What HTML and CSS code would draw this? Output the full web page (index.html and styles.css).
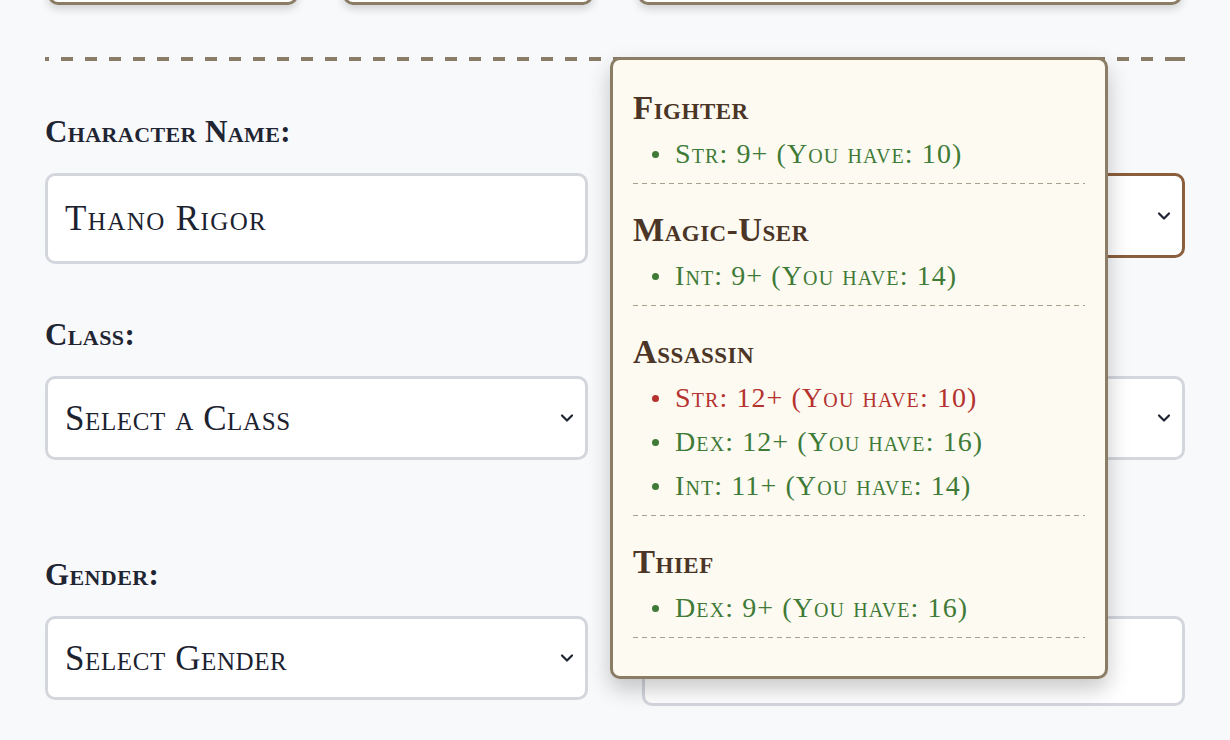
FILE: index.html
```html
<!DOCTYPE html>
<html lang="en">
<head>
<meta charset="utf-8">
<title>Character Creation</title>
<link rel="stylesheet" href="styles.css">
</head>
<body>
<div class="page">
  <div class="cards">
    <div class="card"></div>
    <div class="card"></div>
    <div class="card card-wide"></div>
  </div>

  <div class="divider"></div>

  <form class="form-grid">
    <div class="field">
      <label class="label" for="name">Character Name:</label>
      <input class="control input" id="name" type="text" value="Thano Rigor">
    </div>
    <div class="field">
      <span class="label label-blank" aria-hidden="true"></span>
      <div class="select-wrap">
        <select class="control select focused" id="race" aria-label="Race">
          <option value=""></option>
        </select>
        <svg class="chev" width="14" height="9" viewBox="0 0 14 9"><path d="M2 2l5 5 5-5" fill="none" stroke="#1f2532" stroke-width="2.2" stroke-linecap="round" stroke-linejoin="round"/></svg>
      </div>
    </div>

    <div class="field">
      <label class="label" for="class">Class:</label>
      <div class="select-wrap">
        <select class="control select" id="class">
          <option>Select a Class</option>
        </select>
        <svg class="chev" width="14" height="9" viewBox="0 0 14 9"><path d="M2 2l5 5 5-5" fill="none" stroke="#1f2532" stroke-width="2.2" stroke-linecap="round" stroke-linejoin="round"/></svg>
      </div>
    </div>
    <div class="field">
      <span class="label label-blank" aria-hidden="true"></span>
      <div class="select-wrap">
        <select class="control select" id="align" aria-label="Alignment">
          <option value=""></option>
        </select>
        <svg class="chev" width="14" height="9" viewBox="0 0 14 9"><path d="M2 2l5 5 5-5" fill="none" stroke="#1f2532" stroke-width="2.2" stroke-linecap="round" stroke-linejoin="round"/></svg>
      </div>
      <div class="hint"></div>
    </div>

    <div class="field">
      <label class="label" for="gender">Gender:</label>
      <div class="select-wrap">
        <select class="control select" id="gender">
          <option>Select Gender</option>
        </select>
        <svg class="chev" width="14" height="9" viewBox="0 0 14 9"><path d="M2 2l5 5 5-5" fill="none" stroke="#1f2532" stroke-width="2.2" stroke-linecap="round" stroke-linejoin="round"/></svg>
      </div>
    </div>
    <div class="field">
      <span class="label label-blank" aria-hidden="true"></span>
      <input class="control input input-tall" id="age" type="text" value="" aria-label="Age">
    </div>
  </form>

  <div class="popover">
    <section class="req">
      <h3 class="req-title">Fighter</h3>
      <ul class="req-list">
        <li class="ok">Str: 9+ (You have: 10)</li>
      </ul>
    </section>
    <section class="req">
      <h3 class="req-title">Magic-User</h3>
      <ul class="req-list">
        <li class="ok">Int: 9+ (You have: 14)</li>
      </ul>
    </section>
    <section class="req">
      <h3 class="req-title">Assassin</h3>
      <ul class="req-list">
        <li class="bad">Str: 12+ (You have: 10)</li>
        <li class="ok">Dex: 12+ (You have: 16)</li>
        <li class="ok">Int: 11+ (You have: 14)</li>
      </ul>
    </section>
    <section class="req">
      <h3 class="req-title">Thief</h3>
      <ul class="req-list">
        <li class="ok">Dex: 9+ (You have: 16)</li>
      </ul>
    </section>
  </div>
</div>
</body>
</html>
```

FILE: styles.css
```css
* { box-sizing: border-box; }

html, body {
  margin: 0;
  padding: 0;
  background: #f8f9fb;
  overflow: hidden;
}

body {
  font-family: "Liberation Serif", "Times New Roman", serif;
  font-variant: small-caps;
  color: #1f2532;
}

.page {
  position: relative;
  display: flow-root;
  margin: 0 45px;
  height: 740px;
}

.cards {
  display: grid;
  grid-template-columns: repeat(4, 1fr);
  column-gap: 45px;
  padding: 0 3px;
  margin-top: -75px;
}

.card {
  height: 80px;
  background: #ffffff;
  border: 3px solid #8b7d65;
  border-radius: 10px;
  box-shadow: 0 4px 8px rgba(0, 0, 0, 0.16);
}

.card-wide { grid-column: span 2; }

.divider {
  height: 4px;
  margin: 52px 0 51px;
  background-image: repeating-linear-gradient(to right, #8b7d65 0 12px, transparent 12px 24px);
  background-position: -8px 0;
}

.form-grid {
  display: grid;
  grid-template-columns: 1fr 1fr;
  column-gap: 54px;
  row-gap: 51px;
  margin: 0;
}

.field {
  display: flex;
  flex-direction: column;
}

.label {
  display: block;
  font-size: 31px;
  line-height: 40px;
  font-weight: 700;
  letter-spacing: 0.4px;
  color: #1f2532;
  margin-bottom: 21px;
}

.label-blank { height: 40px; }

.control {
  display: block;
  width: 100%;
  font-family: "Liberation Serif", "Times New Roman", serif;
  font-variant: small-caps;
  font-size: 35px;
  letter-spacing: 0.6px;
  color: #1c2230;
  background: #ffffff;
  border: 3px solid #d3d6dd;
  border-radius: 10px;
  padding: 0 40px 0 17px;
  outline: none;
}

.input { height: 91px; letter-spacing: 1.4px; }
.input-tall { height: 90px; }

.select {
  height: 84px;
  appearance: none;
  -webkit-appearance: none;
}

.select.focused {
  height: 85px;
  border-color: #8b5e3c;
}

.select-wrap {
  position: relative;
}

.chev {
  position: absolute;
  right: 14px;
  top: 50%;
  transform: translateY(-50%);
  pointer-events: none;
}

.hint {
  margin-top: 10px;
  height: 34px;
}

.popover {
  position: absolute;
  left: 565px;
  top: 57px;
  width: 498px;
  background: #fdfaf2;
  border: 3px solid #8b7d65;
  border-radius: 10px;
  box-shadow: 0 10px 22px rgba(0, 0, 0, 0.22);
  padding: 3px 20px 37px;
}

.req {
  padding: 23px 0 8px;
  background-image: repeating-linear-gradient(to right, #a8a08d 0 5px, transparent 5px 9px);
  background-size: 100% 1px;
  background-position: left bottom;
  background-repeat: no-repeat;
  border-bottom: 1px solid transparent;
}

.req-title {
  margin: 0 0 2px;
  font-size: 33px;
  line-height: 44px;
  font-weight: 700;
  letter-spacing: 0.5px;
  color: #4b3526;
}

.req-list {
  list-style: none;
  margin: 0;
  padding: 0;
}

.req-list li {
  display: flex;
  align-items: center;
  font-size: 28px;
  line-height: 44px;
  letter-spacing: 1.1px;
}

.req-list li::before {
  content: "";
  flex: none;
  width: 7px;
  height: 7px;
  border-radius: 50%;
  background: currentColor;
  margin: 0 16px 0 19px;
}

.ok { color: #3f7b37; }
.bad { color: #b5322e; }
```
